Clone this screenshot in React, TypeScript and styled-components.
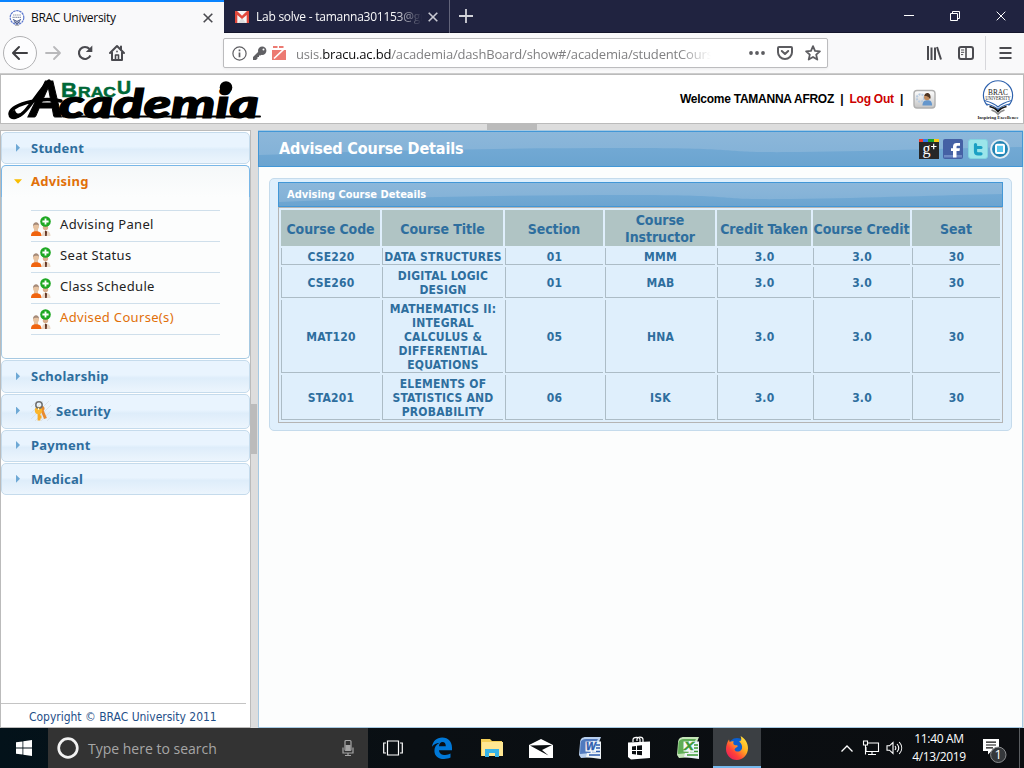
import React from "react";
import styled, { createGlobalStyle, css } from "styled-components";

const segoe = `"Open Sans", "Noto Sans", sans-serif`;
const tahoma = `"DejaVu Sans Condensed", "DejaVu Sans", sans-serif`;
const lucida = `"Noto Sans", "Open Sans", sans-serif`;
const arial = `"Liberation Sans", Arial, sans-serif`;

const GlobalStyle = createGlobalStyle`
  * { box-sizing: border-box; }
  body { margin: 0; overflow: hidden; background: #ddd; }
  svg { display: block; flex: none; }
`;

const Screen = styled.div`
  width: 1024px;
  height: 768px;
  display: flex;
  flex-direction: column;
  overflow: hidden;
  background: #ddd;
`;

/* ---------- browser chrome ---------- */

const TabBar = styled.div`
  height: 33px;
  flex: none;
  display: flex;
  background: #202340;
  border-bottom: 1px solid #14162c;
`;

const Tab = styled.div<{ $active?: boolean }>`
  width: ${(p) => (p.$active ? 224 : 226)}px;
  height: 33px;
  display: flex;
  align-items: center;
  padding: 1px 11px 0 ${(p) => (p.$active ? 9 : 11)}px;
  font: 12px/16px ${segoe};
  ${(p) =>
    p.$active
      ? css`
          background: #f9f9fa;
          color: #0c0c0d;
          border-top: 2px solid #0a84ff;
          padding-top: 0;
        `
      : css`
          color: #f9f9fa;
          border-right: 1px solid #62647a;
        `}
`;

const TabTitle = styled.span<{ $fade?: boolean; $ls: number }>`
  flex: 1;
  min-width: 0;
  overflow: hidden;
  white-space: nowrap;
  margin: 0 6px 0 ${(p) => (p.$fade ? 7 : 6)}px;
  letter-spacing: ${(p) => p.$ls}px;
  ${(p) =>
    p.$fade &&
    css`
      mask-image: linear-gradient(to right, #000 calc(100% - 28px), transparent);
    `}
`;

const NewTab = styled.div`
  flex: 1;
  padding: 8px 0 0 8px;
`;

const WindowControls = styled.div`
  display: flex;
  height: 32px;
`;

const ControlButton = styled.div`
  width: 46px;
  display: flex;
  align-items: center;
  justify-content: center;
`;

const NavBar = styled.div`
  height: 41px;
  flex: none;
  display: flex;
  align-items: center;
  background: #f9f9fa;
  border-bottom: 1px solid #ccc;
  padding-left: 3px;
`;

const BackButton = styled.div`
  width: 34px;
  height: 34px;
  border-radius: 50%;
  border: 1px solid #b1b1b3;
  background: #fdfdfe;
  display: grid;
  place-items: center;
`;

const NavIcon = styled.div`
  width: 32px;
  height: 32px;
  display: grid;
  place-items: center;
`;

const UrlBar = styled.div`
  width: 605px;
  height: 30px;
  margin-left: 90px;
  border: 1px solid #bcbcbe;
  border-radius: 2px;
  background: #fff;
  box-shadow: 0 1px 3px rgba(0, 0, 0, 0.06);
  display: flex;
  align-items: center;
  padding: 0 6px 0 8px;
`;

const PermissionSlot = styled.div`
  padding: 0 5px;
`;

const UrlText = styled.div`
  width: 419px;
  margin-left: 10px;
  overflow: hidden;
  white-space: nowrap;
  font: 13px/20px ${segoe};
  letter-spacing: -0.17px;
  color: #808082;
  padding-top: 1px;
  mask-image: linear-gradient(to right, #000 calc(100% - 36px), transparent calc(100% - 4px));
  b {
    font-weight: 400;
    color: #0c0c0d;
  }
`;

const UrlActions = styled.div`
  margin-left: auto;
  display: flex;
  align-items: center;
  gap: 12px;
`;

const NavTools = styled.div`
  margin-left: auto;
  display: flex;
  align-items: center;
`;

const ToolDivider = styled.div`
  width: 1px;
  height: 34px;
  margin-left: 3px;
  background: #d7d7db;
`;

const MenuSlot = styled.div`
  padding: 0 12px 0 13px;
`;

/* ---------- page header ---------- */

const Banner = styled.header`
  height: 50px;
  flex: none;
  display: flex;
  align-items: center;
  padding-right: 3px;
  background: #fff;
  border: 1px solid #bbb;
`;

const Account = styled.div`
  margin-left: auto;
  display: flex;
  align-items: center;
  white-space: pre;
  font: bold 12px/16px ${arial};
  letter-spacing: -0.25px;
  color: #000;
`;

const LogOut = styled.span`
  color: #cc0000;
`;

const ProfileSlot = styled.div`
  padding: 0 39px 0 10px;
`;

const ResizerRow = styled.div`
  height: 6px;
  flex: none;
  display: flex;
  justify-content: center;
  background: #ddd;
  &::after {
    content: "";
    width: 50px;
    background: #bbb;
  }
`;

const Body = styled.div`
  height: 598px;
  flex: none;
  display: flex;
`;

/* ---------- sidebar ---------- */

const Sidebar = styled.aside`
  width: 251px;
  background: #fff;
  border: 1px solid #bbb;
  display: flex;
  flex-direction: column;
  padding-top: 1px;
`;

const SectionHead = styled.div<{ $h: number; $lift?: boolean; $open?: boolean }>`
  height: ${(p) => p.$h}px;
  flex: none;
  margin-bottom: 1px;
  border: 1px solid #c5dbec;
  border-radius: 5px;
  background: linear-gradient(#e9f4fe 0 45%, #deedfa 55%, #ecf5fd);
  display: flex;
  align-items: center;
  padding: 0 0 ${(p) => (p.$lift ? 2 : 0.5)}px 12px;
  color: #2e6e9e;
  font: bold 13px/18px ${lucida};
  letter-spacing: 0.25px;
  ${(p) =>
    p.$open &&
    css`
      margin-bottom: 0;
      border-color: #79b7e7;
      border-bottom: 0;
      border-radius: 5px 5px 0 0;
      background: linear-gradient(#f5f8f9, #fcfdfd);
      color: #e17009;
    `}
`;

const Arrow = styled.span<{ $open?: boolean }>`
  width: 8px;
  height: 8px;
  margin-right: 9px;
  flex: none;
  ${(p) =>
    p.$open
      ? css`
          background: #f9bd01;
          clip-path: polygon(0 25%, 100% 25%, 50% 80%);
        `
      : css`
          background: #6da8d5;
          clip-path: polygon(25% 0, 75% 50%, 25% 100%);
        `}
`;

const KeySlot = styled.span`
  padding-right: 5px;
`;

const SectionBody = styled.div`
  height: 162px;
  flex: none;
  margin-bottom: 1px;
  padding: 13px 29px 0;
  background: #fcfdfd;
  border: 1px solid #a6c9e2;
  border-top: 0;
  border-radius: 0 0 5px 5px;
`;

const MenuItem = styled.div<{ $active?: boolean }>`
  height: 31px;
  border-top: 1px solid #cfdfeb;
  display: flex;
  gap: 9px;
  padding-top: 5px;
  color: ${(p) => (p.$active ? "#e17009" : "#222")};
  font: 13px/17px ${lucida};
  letter-spacing: 0.33px;
  &:last-child {
    height: 32px;
    border-bottom: 1px solid #cfdfeb;
  }
`;

const Copyright = styled.div`
  margin: auto 4px 0 0;
  height: 24px;
  border-top: 1px solid #c4c4c4;
  padding: 6px 0 0 28px;
  color: #1f4f88;
  font: 12px/15px ${tahoma};
  font-stretch: condensed;
  letter-spacing: -0.02px;
  white-space: nowrap;
`;

const ResizerColumn = styled.div`
  width: 7px;
  background: #ddd;
  display: flex;
  align-items: center;
  &::after {
    content: "";
    width: 6px;
    height: 50px;
    background: #bbb;
  }
`;

/* ---------- main panel ---------- */

const Main = styled.main`
  width: 765px;
  background: #fcfdfd;
  border: 1px solid #a6c9e2;
  display: flex;
  flex-direction: column;
`;

const BlueBar = styled.div<{ $page?: boolean }>`
  height: ${(p) => (p.$page ? 36 : 25)}px;
  margin: 0 ${(p) => (p.$page ? -1 : 0)}px;
  flex: none;
  border: 1px solid #4297d7;
  background: linear-gradient(#8cb7da, #80b0d6);
  display: flex;
  align-items: center;
  position: relative;
  color: #fff;
  font-family: ${tahoma};
  font-stretch: condensed;
  font-weight: bold;
  & > svg:first-child {
    position: absolute;
    inset: 0;
  }
`;

const PageTitle = styled.h1`
  position: relative;
  margin: 0 0 0 20px;
  font-size: 16px;
  line-height: 20px;
  letter-spacing: -0.13px;
`;

const Social = styled.div`
  position: relative;
  margin: 0 12px 0 auto;
  display: flex;
  gap: 4px;
  & > :nth-child(3) {
    margin: 0 -2px 0 1px;
  }
`;

const Card = styled.section`
  margin: 11px 10px 0;
  height: 253px;
  padding: 3px 8px 0;
  background: #dfeffc;
  border: 1px solid #c5dbec;
  border-radius: 5px;
`;

const CardTitle = styled.h2`
  position: relative;
  margin: 1px 0 0 8px;
  font-size: 11px;
  line-height: 14px;
`;

const CourseTable = styled.table`
  width: 725px;
  table-layout: fixed;
  border: 1px solid #b4b4b4;
  border-spacing: 2px;
  border-collapse: separate;
  color: #2e6e9e;
  font-family: ${tahoma};
  font-stretch: condensed;
  font-weight: bold;
  white-space: nowrap;
`;

const HeadCell = styled.th`
  height: 36px;
  padding: 2px 0 0;
  background: #b0c4c4;
  font-size: 14px;
  line-height: 17px;
  letter-spacing: -0.08px;
`;

const Cell = styled.td<{ $h: number }>`
  height: ${(p) => p.$h}px;
  padding: 2px 0 0;
  border-left: 1px solid #acbcc6;
  border-bottom: 1px solid #acbcc6;
  text-align: center;
  font-size: 12px;
  line-height: 14px;
  letter-spacing: 0.2px;
`;

/* ---------- taskbar ---------- */

const Taskbar = styled.footer`
  height: 40px;
  flex: none;
  display: flex;
  background: linear-gradient(to right, #03121a, #0a0f13 40%, #0b0d10);
  color: #fff;
  font-family: ${segoe};
`;

const TaskButton = styled.div<{ $w?: number; $active?: boolean }>`
  width: ${(p) => p.$w ?? 49}px;
  display: grid;
  place-items: center;
  ${(p) =>
    p.$active &&
    css`
      background: #3b3f43;
      border-bottom: 2px solid #76b9ed;
      padding-top: 2px;
    `}
`;

const SearchBox = styled.div`
  width: 320px;
  background: #333;
  display: flex;
  align-items: center;
  padding: 0 12px 0 8px;
  gap: 8px;
  color: #a6a6a6;
  font-size: 14px;
`;

const SearchHint = styled.span`
  flex: 1;
  padding-top: 1px;
`;

const Tray = styled.div`
  margin-left: auto;
  display: flex;
  align-items: center;
`;

const TraySlot = styled.div`
  display: flex;
  align-items: center;
  gap: 6px;
  padding: 0 3px 0 9px;
`;

const Clock = styled.div`
  width: 66px;
  text-align: center;
  font-size: 12px;
  line-height: 18px;
  letter-spacing: -0.35px;
  white-space: nowrap;
`;

const NoticeSlot = styled.div`
  padding: 4px 0 0 10px;
  width: 35px;
`;

const DesktopEdge = styled.div`
  width: 5px;
  height: 40px;
  margin-left: 12px;
  border-left: 1px solid #5a5d60;
`;

/* ---------- drawings ---------- */

const Cross = ({ color, size = 10, w = 1.6 }: { color: string; size?: number; w?: number }) => (
  <svg width={size} height={size} viewBox="0 0 10 10" stroke={color} strokeWidth={w} fill="none">
    <path d="M.7.7l8.6 8.6M9.3.7L.7 9.3" />
  </svg>
);

const Seal = () => (
  <svg width="16" height="16" viewBox="0 0 16 16" fill="none">
    <circle cx="8" cy="7.5" r="6.8" fill="#fff" stroke="#5c78cf" strokeWidth="1.2" strokeDasharray="2.5 .6" />
    <path d="M4 5h8M3.5 7.3h9" stroke="#8a93aa" strokeWidth="1.2" strokeDasharray="1.3 .5" />
    <path d="M4 9.5l4 2 4-2M5 11.5l3 2 3-2" stroke="#4a5a8a" strokeWidth="1.1" />
    <path d="M6 15.2h4" stroke="#999" />
  </svg>
);

const Gmail = () => (
  <svg width="14" height="12" viewBox="0 0 14 12">
    <path fill="#f4f4f4" d="M0 0h14v12H0z" />
    <path fill="#dcdcdc" d="M3 12l4-5 4 5z" />
    <path fill="#e0483c" d="M0 0h2l5 4.8L12 0h2v12h-2.3V4L7 8 2.3 4v8H0z" />
  </svg>
);

const BackIcon = () => (
  <svg width="18" height="16" viewBox="0 0 18 16" fill="none" stroke="#3e3e42" strokeWidth="2" strokeLinecap="round" strokeLinejoin="round">
    <path d="M16 8H2.5M8 2L2 8l6 6" />
  </svg>
);

const ForwardIcon = () => (
  <svg width="18" height="16" viewBox="0 0 18 16" fill="none" stroke="#b9b9bb" strokeWidth="1.8" strokeLinecap="round" strokeLinejoin="round">
    <path d="M2 8h13.5M10 2l6 6-6 6" />
  </svg>
);

const ReloadIcon = () => (
  <svg width="18" height="18" viewBox="0 0 18 18" fill="none">
    <path d="M14.4 11.5A6 6 0 1 1 13.5 5" stroke="#4a4a4f" strokeWidth="2.1" />
    <path d="M16.3 1.5V8H9.8z" fill="#4a4a4f" />
  </svg>
);

const HomeIcon = () => (
  <svg width="18" height="18" viewBox="0 0 18 18" fill="none" stroke="#4a4a4f" strokeLinejoin="round" strokeLinecap="round">
    <path d="M2 9l7-7 7 7" strokeWidth="2" />
    <path d="M4 8.5V16h10V8.5M13 2.5v3" strokeWidth="2" />
    <path d="M7.5 16v-5h3v5M9 7.2v.6" strokeWidth="1.6" />
  </svg>
);

const InfoIcon = () => (
  <svg width="15" height="15" viewBox="0 0 15 15" fill="none" stroke="#5f5f63">
    <circle cx="7.5" cy="7.5" r="6.6" strokeWidth="1.2" />
    <path d="M7.5 6.4v4.8M7.5 3.6v1.6" strokeWidth="1.7" />
  </svg>
);

const PermissionKey = () => (
  <svg width="15" height="15" viewBox="0 0 15 15">
    <path d="M1 14v-3l6-6 3 3-1.5 1.5H7V11H5.5v1.5L4 14z" fill="#606064" />
    <circle cx="10.2" cy="4.8" r="4.2" fill="#606064" />
    <circle cx="11.5" cy="3.5" r="1" fill="#fff" />
  </svg>
);

const BlockedIcon = () => (
  <svg width="14" height="14" viewBox="0 0 14 14">
    <path d="M0 4h14v10H0z" fill="#ec7a72" />
    <path d="M1 1h4.500M7 1h4.500" stroke="#ec7a72" strokeWidth="2" />
    <path d="M2 12.500L13.500 1.500" stroke="#fff" strokeWidth="1.600" />
    <path d="M0 3h14" stroke="#fff" />
  </svg>
);

const Dots = () => (
  <svg width="16" height="4" viewBox="0 0 16 4" fill="#5c5c60">
    <circle cx="2" cy="2" r="1.9" />
    <circle cx="8" cy="2" r="1.9" />
    <circle cx="14" cy="2" r="1.9" />
  </svg>
);

const Pocket = () => (
  <svg width="16" height="14" viewBox="0 0 16 14" fill="none" stroke="#5c5c60" strokeWidth="2" strokeLinecap="round" strokeLinejoin="round">
    <path d="M2 1h12a1 1 0 0 1 1 1v4.2a7 6.8 0 0 1-14 0V2a1 1 0 0 1 1-1z" />
    <path d="M4.8 5L8 8l3.200-3" />
  </svg>
);

const Star = () => (
  <svg width="16" height="16" viewBox="0 0 16 16" fill="none" stroke="#5c5c60" strokeWidth="1.8" strokeLinejoin="round">
    <path d="M8 1.200l2 4.600 4.900.5-3.700 3.300 1.100 5L8 12l-4.300 2.600 1.100-5L1.100 6.300 6 5.800z" />
  </svg>
);

const Library = () => (
  <svg width="16" height="14" viewBox="0 0 16 14" stroke="#4a4a4f" strokeWidth="2">
    <path d="M2 0v14M5.500 1.500V14M9 1.500V14" />
    <path d="M11 1l4 12.500" />
  </svg>
);

const SidebarIcon = () => (
  <svg width="16" height="14" viewBox="0 0 16 14" fill="none" stroke="#4a4a4f">
    <rect x="1" y="1" width="14" height="12" rx="2" strokeWidth="2" />
    <path d="M8 1v12" strokeWidth="1.6" />
    <path d="M3 4h3.2M3 6.300h3.200M3 8.600h2.200" />
  </svg>
);

const MenuIcon = () => (
  <svg width="13" height="12" viewBox="0 0 13 12" stroke="#4a4a4f" strokeWidth="2">
    <path d="M.5 1h12M.5 6h12M.5 11h12" />
  </svg>
);

const AcademiaLogo = () => (
  <svg width="264" height="46" viewBox="0 0 264 46" overflow="visible">
    <g fill="#000" stroke="#000" fontFamily="Lato, sans-serif" fontWeight="900" fontStyle="italic">
      <text x="29" y="41" fontSize="49" strokeWidth="1" textLength="33" lengthAdjust="spacingAndGlyphs">A</text>
      <text x="58" y="41.500" fontSize="39" strokeWidth="1.200" textLength="200" lengthAdjust="spacingAndGlyphs">cademia</text>
    </g>
    <circle cx="225" cy="11.500" r="6.300" />
    <path d="M60 25C36 20 9 30 9 38c0 6 9 4 16-4S41 12 48 5" fill="none" stroke="#000" strokeWidth="3.400" strokeLinecap="round" />
    <path d="M8.500 38c0 5 9 5 14-1-5 2-8 2-9-2z" stroke="#000" strokeWidth="1.500" />
    <path d="M62 40.500h197" stroke="#000" strokeWidth="2" strokeLinecap="round" />
    <g fill="#006837" stroke="#006837" strokeWidth=".5" fontFamily="Liberation Sans, sans-serif" fontWeight="bold">
      <text x="60" y="20.500" fontSize="20" textLength="16" lengthAdjust="spacingAndGlyphs">B</text>
      <text x="77" y="20.500" fontSize="14.500" textLength="38" lengthAdjust="spacingAndGlyphs">RAC</text>
      <text x="116" y="18" fontSize="18" textLength="14" lengthAdjust="spacingAndGlyphs">U</text>
    </g>
  </svg>
);

const ProfileIcon = () => (
  <svg width="24" height="21" viewBox="0 0 24 21">
    <defs>
      <linearGradient id="plate" x2="0" y2="1">
        <stop stopColor="#fff" />
        <stop offset="1" stopColor="#c4c4c4" />
      </linearGradient>
    </defs>
    <rect x="1" y="1.500" width="21" height="17.500" rx="3" fill="url(#plate)" stroke="#b0b0b0" strokeWidth="1.400" />
    <circle cx="7.500" cy="9" r="3.700" fill="none" stroke="#b8cbe0" strokeWidth="2" strokeDasharray="2 1" />
    <path d="M9.500 16.500c0-4 2-5.200 5-5.200s4.500 1.200 4.500 5.200z" fill="#6496cc" />
    <circle cx="14" cy="8.300" r="3" fill="#c08a5c" />
    <path d="M11.300 7c.5-4.500 7-4 6.200 2.500-1.500.5-1-2.800-6.200-2.500z" fill="#4e3422" />
  </svg>
);

const UniversityLogo = () => (
  <svg width="44" height="42" viewBox="0 0 44 42" fill="none">
    <path d="M11.500 27.500A14.600 14.600 0 1 1 32.500 27.500" stroke="#2f62ad" strokeWidth="1.200" />
    <g fill="#222" fontFamily="Liberation Serif, serif" fontWeight="400" letterSpacing="0" textAnchor="middle">
      <text x="22" y="16.500" fontSize="8.500" textLength="20" lengthAdjust="spacingAndGlyphs">BRAC</text>
      <text x="22" y="22.300" fontSize="6" textLength="25" lengthAdjust="spacingAndGlyphs">UNIVERSITY</text>
      <text x="22" y="41" fontSize="4.500" fontWeight="bold" textLength="41" lengthAdjust="spacingAndGlyphs">Inspiring Excellence</text>
    </g>
    <path d="M8.500 22.500C14 24 19 26 22 29c3-3 8-5 13.500-6.500M10.500 26c5 1 9 3 11.500 5.500 2.500-2.500 6.500-4.500 11.500-5.500" stroke="#2f62ad" strokeWidth="1.200" />
    <path d="M13.500 28.500c4 1 7 3 8.500 5 1.500-2 4.500-4 8.500-5" stroke="#111" strokeWidth="1.800" />
    <path d="M15.500 32c3 1 5.500 2.800 6.500 4.500 1-1.700 3.500-3.500 6.500-4.500" stroke="#8b8b8b" strokeWidth="1.400" />
  </svg>
);

const PeopleIcon = () => (
  <svg width="20" height="20" viewBox="0 0 20 20">
    <circle cx="5" cy="10.500" r="3" fill="#e7c3a1" />
    <path d="M2 10c0-5 6.200-5 6 0C7.500 8.200 3.500 8.200 2 10z" fill="#a58a78" />
    <path d="M3 13h4v3H3z" fill="#e7c3a1" />
    <path d="M0 20c0-3.800 2-4.800 5-4.800s5.500 1 5.500 4.800z" fill="#f0640f" />
    <circle cx="14.500" cy="11.500" r="2.700" fill="#d8ae8c" />
    <path d="M11 20c0-4 1.500-5.300 3.700-5.300S19.500 16 19.500 20z" fill="#ead9c8" />
    <path d="M14 14.500l2 1-.3 4.500h-1.500z" fill="#5b2c1c" />
    <circle cx="14.500" cy="5.500" r="5.300" fill="#1ea823" />
    <path d="M14.500 2.400v6.200M11.400 5.500h6.200" stroke="#fff" strokeWidth="1.800" />
  </svg>
);

const KeysIcon = () => (
  <svg width="20" height="20" viewBox="0 0 20 20" fill="none">
    <path d="M0 6l6-6M0 12L12 0M0 18L18 0M4 20L20 4M10 20l10-10M16 20l4-4" stroke="#d5dde4" strokeWidth=".8" />
    <path d="M10 7l4.500 10.500" stroke="#e88a2e" strokeWidth="3" />
    <circle cx="11" cy="7.500" r="2.500" fill="#e88a2e" />
    <path d="M8 10v9.500M7.500 16h3" stroke="#f7aa22" strokeWidth="2.800" />
    <circle cx="7.500" cy="9.500" r="3.700" fill="#fbb62b" />
    <circle cx="8" cy="4" r="3.200" stroke="#707070" strokeWidth="1.500" />
    <path d="M7.500 7v2" stroke="#fff2c4" strokeWidth="1.200" />
  </svg>
);

const Wave = ({ h, dy }: { h: number; dy: number }) => (
  <svg width="100%" height={h} viewBox={`0 0 764 ${h}`} preserveAspectRatio="none">
    <defs>
      <linearGradient id={`wave${h}`} x2="0" y2="1">
        <stop stopColor="#72a9d4" />
        <stop offset="1" stopColor="#6ba4d0" />
      </linearGradient>
    </defs>
    <path d={`M0 ${dy + 5}C130 ${dy} 240 ${dy - 2} 370 ${dy - 2}S450 ${dy + 3} 540 ${dy + 2}S700 ${dy - 2} 764 ${dy - 3}V${h}H0z`} fill={`url(#wave${h})`} />
  </svg>
);

const GooglePlus = () => (
  <svg width="20" height="20" viewBox="0 0 20 20">
    <path fill="#262626" d="M0 0h20v20H0z" />
    <path stroke="#f03a2c" strokeWidth="3" d="M0 1.500h4" />
    <path stroke="#3476e8" strokeWidth="3" d="M4 1.500h5" />
    <path stroke="#19a22d" strokeWidth="3" d="M9 1.500h6" />
    <path stroke="#fbc914" strokeWidth="3" d="M15 1.500h5" />
    <text x="3.500" y="14.500" fill="#fff" fontSize="16" fontWeight="400" fontFamily="Liberation Serif, serif">g</text>
    <path d="M12 7.500h5.500M14.700 4.800v5.400" stroke="#fff" strokeWidth="1.200" />
  </svg>
);

const Facebook = () => (
  <svg width="20" height="20" viewBox="0 0 20 20">
    <rect width="20" height="20" rx="2" fill="#4561a5" />
    <path d="M1 16h18v2.500H1z" fill="#6f8ac4" />
    <path d="M10 18.500V12H8V9.200h2V7.500C10 5 11.500 4 13.500 4H17v2.800h-2c-1 0-1.500.4-1.500 1.200v1.200H17L16.500 12h-3v6.500z" fill="#fff" />
  </svg>
);

const Twitter = () => (
  <svg width="20" height="20" viewBox="0 0 20 20">
    <rect x=".5" y=".5" width="19" height="19" rx="2.500" fill="#9be5ea" stroke="#83d3e0" />
    <path d="M7.500 5.500v7c0 1.600 1 2.300 2.500 2.300h3M7.500 8.500h5.500" fill="none" stroke="#1ba0c4" strokeWidth="3.200" strokeLinecap="round" />
  </svg>
);

const RoundBadge = () => (
  <svg width="20" height="20" viewBox="0 0 20 20">
    <circle cx="10" cy="10" r="8.900" fill="#2384b4" stroke="#e3edf3" strokeWidth="1.900" />
    <rect x="6" y="5.800" width="8" height="8.200" rx="1" fill="#56c6ec" stroke="#fff" strokeWidth="2" />
  </svg>
);

const Windows = () => (
  <svg width="16" height="16" viewBox="0 0 16 16" fill="#fff">
    <path d="M0 2.300L6.500 1.400v6.200H0zM7.300 1.300L16 0v7.600H7.300zM0 8.400h6.500v6.200L0 13.700zM7.300 8.400H16V16l-8.700-1.300z" />
  </svg>
);

const Cortana = () => (
  <svg width="24" height="24" viewBox="0 0 24 24">
    <circle cx="12" cy="12" r="9.300" fill="none" stroke="#f2f2f2" strokeWidth="2.700" />
  </svg>
);

const Mic = () => (
  <svg width="16" height="18" viewBox="0 0 16 18" fill="none" stroke="#a6a6a6">
    <rect x="5" y="1.500" width="6" height="10" rx="1" strokeWidth="1.200" />
    <path d="M5.500 6h5v5h-5z" fill="#a6a6a6" stroke="none" />
    <path d="M3 8.500V14h10V8.500M8 14v2.500M5 16.500h6" strokeWidth="1.200" />
  </svg>
);

const TaskView = () => (
  <svg width="20" height="16" viewBox="0 0 20 16" fill="none" stroke="#fff" strokeWidth="1.200">
    <path d="M4.500 1h11v14h-11zM3 3H.7v10H3M17 3h2.300v10H17" />
  </svg>
);

const Edge = () => (
  <svg width="20" height="22" viewBox="0 0 20 22" fill="#0078d7">
    <path d="M0 9.800C.8 4 4.700.5 10.200.5 16.500.5 20 5 20 10.700v2.500H7c.3 3.500 3 4.700 6.200 4.700 2.200 0 3.900-.6 5.300-1.400v4.100c-1.900 1-4.300 1.400-6.500 1.400-6 0-9.600-3.300-9.600-8.300 0-3.400 1.800-6.400 5.200-7.900C4.200 6.300 1.700 7.600 0 9.800zM7 9.300h6.800c0-3-1.200-4.400-3.300-4.400C8.500 4.900 7.200 6.700 7 9.300z" />
  </svg>
);

const Explorer = () => (
  <svg width="22" height="20" viewBox="0 0 22 20">
    <path d="M0 1h9l2 2h10v15H0z" fill="#f4cf57" />
    <path d="M1 4h21v14H1z" fill="#ffe792" />
    <path d="M4 19v-8h14v8h-4v-4H8v4z" fill="#37b4e8" />
  </svg>
);

const Mail = () => (
  <svg width="24" height="20" viewBox="0 0 24 20">
    <path d="M0 7l12-6 12 6v13H0z" fill="#fff" />
    <path d="M1 7.500L23 7l-10 5 6.500 5.500L11 13z" fill="#0b0e11" />
  </svg>
);

const OfficeIcon = ({ letter, dark, light }: { letter: string; dark: string; light: string }) => (
  <svg width="24" height="24" viewBox="0 0 24 24">
    <path d="M2 7C2 3 4 1 8 1h15l-2 5-3 15-15 1-2-3z" fill={light} />
    <path d="M2.500 7C3 4 5 3 8 3h12l-8 14-10 1z" fill={dark} opacity=".75" />
    <path d="M13 5l10 .5V23l-15-2 1-4h4z" fill="#eef3f6" />
    <path d="M18 9h4M18 12h4M14 15.500h8M11 19h11" stroke={dark} strokeWidth="1.700" />
    <path d="M7.500 5.500h10.500V16l-10.500-.5z" fill="#f4f7fb" />
    <text x="8" y="14.300" fill={dark} stroke={dark} strokeWidth=".4" fontFamily="Liberation Sans, sans-serif" fontStyle="italic" fontWeight="bold" fontSize="10.500" textLength="10" lengthAdjust="spacingAndGlyphs">{letter}</text>
  </svg>
);

const Store = () => (
  <svg width="22" height="24" viewBox="0 0 22 24">
    <path d="M0 6.500l22-1V22L3 23.500 0 21z" fill="#fff" />
    <path d="M5 6V3.500C5 1 12 .2 12 3.500V6M9 5V3c0-2.500 6-2.500 6 .5V6" fill="none" stroke="#fff" strokeWidth="1.200" />
    <path d="M4 10.500l4-.5v4H4zM9 9.800l5-.6V14H9zM4 15h4v3.600L4 18zM9 15h5v4.300l-5-.6z" fill="#0b0e11" />
  </svg>
);

const Firefox = () => (
  <svg width="24" height="24" viewBox="0 0 24 24">
    <defs>
      <linearGradient id="flame" x1="1" y1="0" x2="0.100" y2="1">
        <stop stopColor="#fff04a" />
        <stop offset=".4" stopColor="#ffb01f" />
        <stop offset=".7" stopColor="#ff4238" />
        <stop offset="1" stopColor="#e21863" />
      </linearGradient>
    </defs>
    <circle cx="12" cy="10.500" r="8.500" fill="#0b5fd0" />
    <path d="M15.500 0c4.500 2.500 7.500 7 7.500 12.300C23 18.800 18 24 11.800 24 5.500 24 1 19 1 13c0-3.500 1.200-7 3-9.500l.7 2.500c1.300-.8 2.800-1 4-.6C8 6.500 8 8 9.500 9c1.500.3 3 .3 3.300 1-.6 1.500-2.300 1.700-3.300 3.400 1.500 3.500 6.500 2.600 7.500-.9.600-3-.8-5.500-3-7 3-.2 2.500-3.500 1.500-5.500z" fill="url(#flame)" />
  </svg>
);

const Network = () => (
  <svg width="18" height="16" viewBox="0 0 18 16" fill="none" stroke="#fff" strokeWidth="1.100">
    <path d="M6 3h10.500v8.500H4V7M10 11.500v3M6 14.500h8M1.500 1h4v4h-4zM3.500 5v9.500" />
  </svg>
);

const Speaker = () => (
  <svg width="17" height="14" viewBox="0 0 17 14" fill="none" stroke="#fff" strokeWidth="1.100">
    <path d="M1 4.800h2.500L7 1.500v11L3.500 9.200H1zM9 5c1 1.200 1 2.800 0 4M11 3c2.200 2.500 2.200 5.500 0 8M13.200 1c3.300 3.600 3.300 8.400 0 12" />
  </svg>
);

const Notifications = () => (
  <svg width="26" height="28" viewBox="0 0 26 28">
    <path d="M1 3h16v12H9.500L6 18.500V15H1z" fill="#fff" />
    <path d="M4 6.200h10M4 9h10M4 11.800h7" stroke="#111" strokeWidth="1.200" />
    <circle cx="16.300" cy="18.800" r="7.700" fill="#35383b" stroke="#8a8c8e" />
    <text x="16.300" y="23.300" textAnchor="middle" fontSize="13" fill="#fff" fontFamily="Open Sans, sans-serif">1</text>
  </svg>
);

/* ---------- data ---------- */

const columns: { title: string[]; width: number }[] = [
  { title: ["Course Code"], width: 99 },
  { title: ["Course Title"], width: 121 },
  { title: ["Section"], width: 98 },
  { title: ["Course", "Instructor"], width: 110 },
  { title: ["Credit Taken"], width: 94 },
  { title: ["Course Credit"], width: 97 },
  { title: ["Seat"], width: 88 },
];

const courses = [
  { h: 17, code: "CSE220", title: ["DATA STRUCTURES"], section: "01", by: "MMM" },
  { h: 31, code: "CSE260", title: ["DIGITAL LOGIC", "DESIGN"], section: "01", by: "MAB" },
  { h: 73, code: "MAT120", title: ["MATHEMATICS II:", "INTEGRAL", "CALCULUS &", "DIFFERENTIAL", "EQUATIONS"], section: "05", by: "HNA" },
  { h: 45, code: "STA201", title: ["ELEMENTS OF", "STATISTICS AND", "PROBABILITY"], section: "06", by: "ISK" },
];

const Lines = ({ of }: { of: string[] }) => (
  <>
    {of.map((line, i) => (
      <React.Fragment key={line}>
        {i > 0 && <br />}
        {line}
      </React.Fragment>
    ))}
  </>
);

export default function App() {
  return (
    <Screen>
      <GlobalStyle />
      <TabBar>
        <Tab $active>
          <Seal />
          <TabTitle $ls={-0.3}>BRAC University</TabTitle>
          <Cross color="#4a4a4f" />
        </Tab>
        <Tab>
          <Gmail />
          <TabTitle $fade $ls={-0.25}>Lab solve - tamanna301153@gmail.com</TabTitle>
          <Cross color="#c9cad3" />
        </Tab>
        <NewTab>
          <svg width="16" height="16" viewBox="0 0 16 16" stroke="#d2d3da" strokeWidth="1.800">
            <path d="M8 1v14M1 8h14" />
          </svg>
        </NewTab>
        <WindowControls>
          <ControlButton>
            <svg width="10" height="10" viewBox="0 0 10 10" stroke="#fff"><path d="M0 4.500h10" /></svg>
          </ControlButton>
          <ControlButton>
            <svg width="10" height="10" viewBox="0 0 10 10" stroke="#fff" fill="none"><path d="M.5 2.500h7v7h-7zM2.500 2.500v-2h7v7h-2" /></svg>
          </ControlButton>
          <ControlButton>
            <Cross color="#fff" size={10} w={1} />
          </ControlButton>
        </WindowControls>
      </TabBar>
      <NavBar>
        <BackButton><BackIcon /></BackButton>
        <NavIcon><ForwardIcon /></NavIcon>
        <NavIcon><ReloadIcon /></NavIcon>
        <NavIcon><HomeIcon /></NavIcon>
        <UrlBar>
          <InfoIcon />
          <PermissionSlot><PermissionKey /></PermissionSlot>
          <BlockedIcon />
          <UrlText>
            usis.<b>bracu.ac.bd</b>/academia/dashBoard/show#/academia/studentCourse
          </UrlText>
          <UrlActions>
            <Dots />
            <Pocket />
            <Star />
          </UrlActions>
        </UrlBar>
        <NavTools>
          <NavIcon><Library /></NavIcon>
          <NavIcon><SidebarIcon /></NavIcon>
          <ToolDivider />
          <MenuSlot><MenuIcon /></MenuSlot>
        </NavTools>
      </NavBar>

      <Banner>
        <AcademiaLogo />
        <Account>
          <span>Welcome TAMANNA AFROZ  |  </span>
          <LogOut>Log Out</LogOut>
          <span>  |</span>
          <ProfileSlot><ProfileIcon /></ProfileSlot>
          <UniversityLogo />
        </Account>
      </Banner>
      <ResizerRow />

      <Body>
        <Sidebar>
          <SectionHead $h={32}><Arrow />Student</SectionHead>
          <SectionHead $h={32} $open><Arrow $open />Advising</SectionHead>
          <SectionBody>
            {["Advising Panel", "Seat Status", "Class Schedule", "Advised Course(s)"].map((label, i) => (
              <MenuItem key={label} $active={i === 3}>
                <PeopleIcon />
                {label}
              </MenuItem>
            ))}
          </SectionBody>
          <SectionHead $h={33}><Arrow />Scholarship</SectionHead>
          <SectionHead $h={35} $lift><Arrow /><KeySlot><KeysIcon /></KeySlot>Security</SectionHead>
          <SectionHead $h={32} $lift><Arrow />Payment</SectionHead>
          <SectionHead $h={32}><Arrow />Medical</SectionHead>
          <Copyright>Copyright © BRAC University 2011</Copyright>
        </Sidebar>
        <ResizerColumn />
        <Main>
          <BlueBar $page>
            <Wave h={34} dy={18} />
            <PageTitle>Advised Course Details</PageTitle>
            <Social>
              <GooglePlus />
              <Facebook />
              <Twitter />
              <RoundBadge />
            </Social>
          </BlueBar>
          <Card>
            <BlueBar>
              <Wave h={23} dy={14} />
              <CardTitle>Advising Course Deteails</CardTitle>
            </BlueBar>
            <CourseTable>
              <colgroup>
                {columns.map((c) => (
                  <col key={c.title.join(" ")} width={c.width} />
                ))}
              </colgroup>
              <thead>
                <tr>
                  {columns.map((c) => (
                    <HeadCell key={c.title.join(" ")}><Lines of={c.title} /></HeadCell>
                  ))}
                </tr>
              </thead>
              <tbody>
                {courses.map((c) => (
                  <tr key={c.code}>
                    <Cell $h={c.h}>{c.code}</Cell>
                    <Cell $h={c.h}><Lines of={c.title} /></Cell>
                    <Cell $h={c.h}>{c.section}</Cell>
                    <Cell $h={c.h}>{c.by}</Cell>
                    <Cell $h={c.h}>3.0</Cell>
                    <Cell $h={c.h}>3.0</Cell>
                    <Cell $h={c.h}>30</Cell>
                  </tr>
                ))}
              </tbody>
            </CourseTable>
          </Card>
        </Main>
      </Body>

      <Taskbar>
        <TaskButton $w={48}><Windows /></TaskButton>
        <SearchBox>
          <Cortana />
          <SearchHint>Type here to search</SearchHint>
          <Mic />
        </SearchBox>
        <TaskButton><TaskView /></TaskButton>
        <TaskButton $w={50}><Edge /></TaskButton>
        <TaskButton><Explorer /></TaskButton>
        <TaskButton><Mail /></TaskButton>
        <TaskButton><OfficeIcon letter="W" dark="#2d5cae" light="#b9d0ef" /></TaskButton>
        <TaskButton><Store /></TaskButton>
        <TaskButton $w={50}><OfficeIcon letter="X" dark="#3c9a35" light="#c5e5b8" /></TaskButton>
        <TaskButton $w={48} $active><Firefox /></TaskButton>
        <Tray>
          <svg width="12" height="7" viewBox="0 0 12 7" fill="none" stroke="#fff" strokeWidth="1.300"><path d="M.5 6.500L6 1l5.500 5.500" /></svg>
          <TraySlot><Network /><Speaker /></TraySlot>
          <Clock>11:40 AM<br />4/13/2019</Clock>
          <NoticeSlot><Notifications /></NoticeSlot>
          <DesktopEdge />
        </Tray>
      </Taskbar>
    </Screen>
  );
}
